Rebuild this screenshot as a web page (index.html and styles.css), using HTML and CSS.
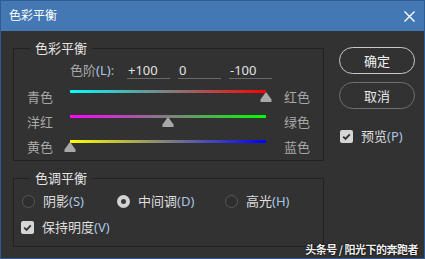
FILE: index.html
```html
<!DOCTYPE html>
<html lang="zh">
<head>
<meta charset="utf-8">
<title>色彩平衡</title>
<link rel="stylesheet" href="styles.css">
</head>
<body>
<div class="dialog">
  <div class="titlebar">
    <span class="title">色彩平衡</span>
    <svg class="close" width="11" height="11" viewBox="0 0 11 11"><path d="M0.5 0.5 L10.5 10.5 M10.5 0.5 L0.5 10.5" stroke="#fff" stroke-width="1.4" fill="none"/></svg>
  </div>
  <div class="body">
    <div class="left">
      <fieldset class="group g1">
        <legend>色彩平衡</legend>
        <div class="levels">
          <span class="levels-label">色阶<span class="key">(L)</span>:</span>
          <span class="field">+100</span>
          <span class="field">0</span>
          <span class="field">-100</span>
        </div>
        <div class="slider-row">
          <span class="slabel">青色</span>
          <div class="slider"><div class="track t1"></div><svg class="thumb" style="left:100%" width="12" height="10" viewBox="0 0 12 10"><path d="M0.5 10 L0.5 7.5 L5 1.2 Q6 0 7 1.2 L11.5 7.5 L11.5 10 Z" fill="#a9a9a9"/></svg></div>
          <span class="slabel rl">红色</span>
        </div>
        <div class="slider-row">
          <span class="slabel">洋红</span>
          <div class="slider"><div class="track t2"></div><svg class="thumb" style="left:50%" width="12" height="10" viewBox="0 0 12 10"><path d="M0.5 10 L0.5 7.5 L5 1.2 Q6 0 7 1.2 L11.5 7.5 L11.5 10 Z" fill="#a9a9a9"/></svg></div>
          <span class="slabel rl">绿色</span>
        </div>
        <div class="slider-row">
          <span class="slabel">黄色</span>
          <div class="slider"><div class="track t3"></div><svg class="thumb" style="left:0%" width="12" height="10" viewBox="0 0 12 10"><path d="M0.5 10 L0.5 7.5 L5 1.2 Q6 0 7 1.2 L11.5 7.5 L11.5 10 Z" fill="#a9a9a9"/></svg></div>
          <span class="slabel rl">蓝色</span>
        </div>
      </fieldset>
      <fieldset class="group g2">
        <legend>色调平衡</legend>
        <div class="radios">
          <label class="opt o1"><span class="radio"></span>阴影<span class="key">(S)</span></label>
          <label class="opt o2"><span class="radio on"></span>中间调<span class="key">(D)</span></label>
          <label class="opt"><span class="radio"></span>高光<span class="key">(H)</span></label>
        </div>
        <label class="opt check-row"><span class="checkbox"><svg width="13" height="13" viewBox="0 0 13 13"><path d="M3.2 6.6 L5.5 8.9 L9.8 4.3" stroke="#333" stroke-width="1.8" fill="none"/></svg></span>保持明度<span class="key">(V)</span></label>
      </fieldset>
    </div>
    <div class="right">
      <button class="btn primary">确定</button>
      <button class="btn">取消</button>
      <label class="opt preview"><span class="checkbox"><svg width="13" height="13" viewBox="0 0 13 13"><path d="M3.2 6.6 L5.5 8.9 L9.8 4.3" stroke="#333" stroke-width="1.8" fill="none"/></svg></span>预览<span class="key">(P)</span></label>
    </div>
  </div>
  <div class="watermark">头条号 / 阳光下的奔跑者</div>
</div>
</body>
</html>
```
FILE: styles.css
```css
html, body {
  margin: 0;
  padding: 0;
  background: #323232;
}
body {
  width: 425px;
  height: 259px;
  overflow: hidden;
  font-family: "Noto Sans", "Noto Sans CJK SC", sans-serif;
  font-size: 13px;
  color: #dcdcdc;
}
.dialog {
  position: relative;
  box-sizing: border-box;
  width: 425px;
  height: 259px;
  border: 1px solid #2c5d97;
  background: #323232;
}
.titlebar {
  height: 30px;
  background: #4378b4;
  display: flex;
  align-items: center;
  justify-content: space-between;
  padding: 0 9px 0 8px;
}
.title {
  font-size: 12px;
  line-height: 16px;
  color: #fff;
}
.close { display: block; }
.body {
  display: flex;
  padding: 8px 0 0 12px;
}
.left {
  width: 311px;
  display: flex;
  flex-direction: column;
  gap: 8px;
}
.group {
  margin: 0;
  padding: 0;
  border: 1px solid #222;
  min-width: 0;
}
.group legend {
  margin-left: 16px;
  padding: 0 5px;
  font-size: 13px;
  line-height: 18px;
  color: #e4e4e4;
}
.g1 { padding-bottom: 1px; }
.levels {
  display: flex;
  align-items: flex-start;
  margin: 5px 0 5px 56px;
}
.levels-label {
  width: 57px;
  line-height: 16px;
  color: #a8a8a8;
}
.key { color: #a9c6e6; }
.field {
  width: 42px;
  height: 16px;
  line-height: 16px;
  margin-right: 8px;
  border-bottom: 1px solid #6a6a6a;
  color: #e2e2e2;
  padding-left: 1px;
  box-sizing: content-box;
}
.slider-row {
  display: grid;
  grid-template-columns: 43px 196px 18px 26px;
  align-items: center;
  height: 25px;
  padding-left: 13px;
}
.slabel {
  line-height: 16px;
  color: #a8a8a8;
}
.slabel.rl { grid-column: 4; }
.slider {
  position: relative;
  height: 13px;
}
.track {
  height: 3px;
}
.t1 { background: linear-gradient(to right, #00ffff, #ff0000); }
.t2 { background: linear-gradient(to right, #ff00ff, #00ff00); }
.t3 { background: linear-gradient(to right, #ffff00, #0000ff); }
.thumb {
  position: absolute;
  top: 2px;
  margin-left: -6px;
  display: block;
}
.g2 { padding: 4px 0 9px 8px; }
.g2 legend { margin-left: 8px; }
.radios {
  display: grid;
  grid-template-columns: 95px 108px auto;
  height: 20px;
  align-items: center;
}
.opt {
  display: flex;
  align-items: center;
  line-height: 16px;
  color: #dedede;
}
.radio {
  box-sizing: border-box;
  width: 13px;
  height: 13px;
  border-radius: 50%;
  border: 1.5px solid #585858;
  background: #2e2e2e;
  margin-right: 8px;
  flex: none;
}
.radio.on {
  border: 4px solid #d4d4d4;
  background: #3a3a3a;
}
.checkbox {
  width: 13px;
  height: 13px;
  border-radius: 2px;
  background: #d6d6d6;
  margin-right: 8px;
  flex: none;
}
.checkbox svg { display: block; }
.check-row {
  height: 20px;
  margin-top: 6px;
  margin-left: -1px;
}
.right {
  margin-left: 15px;
  display: flex;
  flex-direction: column;
  width: 76px;
  padding-top: 8px;
}
.btn {
  box-sizing: border-box;
  width: 76px;
  height: 27px;
  border-radius: 14px;
  border: 1px solid #707070;
  background: #323232;
  color: #e6e6e6;
  font-family: "Noto Sans", "Noto Sans CJK SC", sans-serif;
  font-size: 13px;
  line-height: 16px;
  padding: 0;
  margin-bottom: 8px;
}
.btn.primary {
  border: 1.5px solid #c8c8c8;
  color: #f2f2f2;
}
.preview {
  margin-top: 9px;
  margin-left: 1px;
  height: 20px;
}
.watermark {
  position: absolute;
  right: 6px;
  bottom: 2px;
  font-family: "Noto Sans CJK SC", sans-serif;
  font-size: 11px;
  font-weight: bold;
  line-height: 14px;
  letter-spacing: -0.5px;
  color: #efefef;
  text-shadow: 0 0 2px #000, 0 0 1px #000;
}
```
